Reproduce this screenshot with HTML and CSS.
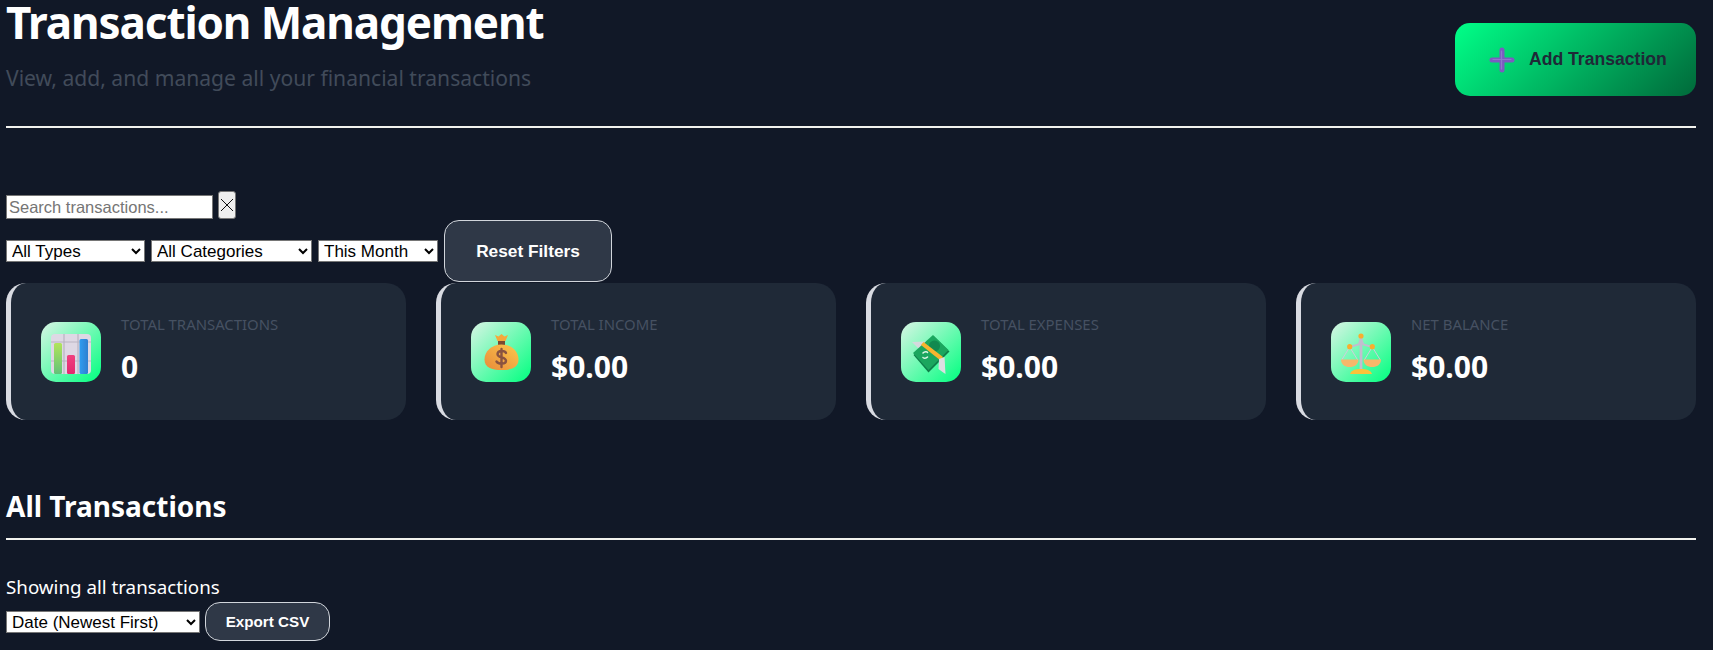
FILE: index.html
```html
<!DOCTYPE html>
<html lang="en">
<head>
    <meta charset="UTF-8">
    <meta name="viewport" content="width=device-width, initial-scale=1.0">
    <title>Transaction Management</title>
    <link rel="stylesheet" href="styles.css">
</head>
<body>
    <div class="page">
        <header class="page-header">
            <div>
                <h1>Transaction Management</h1>
                <p class="subtitle">View, add, and manage all your financial transactions</p>
            </div>
            <button class="add-btn">
                <svg class="plus" viewBox="0 0 28 28" width="28" height="28">
                    <path d="M14 4v20M4 14h20" stroke="#7a5cc0" stroke-width="5" stroke-linecap="round" fill="none"/>
                    <path d="M13.500 5v18M5 13.500h18" stroke="#8f78cc" stroke-width="1.200" stroke-linecap="round" fill="none"/>
                </svg>
                Add Transaction
            </button>
        </header>

        <div class="search-row">
            <input type="text" class="search" placeholder="Search transactions...">
            <button class="clear-btn">
                <svg viewBox="0 0 14 14" width="14" height="14">
                    <path d="M1 1l12 12M13 1l-12 12" stroke="#111" stroke-width="1" fill="none"/>
                </svg>
            </button>
        </div>
        <div class="filter-row">
            <select class="sel-type"><option>All Types</option></select>
            <select class="sel-cat"><option>All Categories</option></select>
            <select class="sel-range"><option>This Month</option></select>
            <button class="reset-btn">Reset Filters</button>
        </div>

        <section class="cards">
            <div class="card">
                <div class="card-icon">
                    <svg viewBox="0 0 60 60" width="60" height="60">
                        <defs>
                            <linearGradient id="barGreen" x1="0" y1="0" x2="0" y2="1">
                                <stop offset="0" stop-color="#b2e45a"/>
                                <stop offset="1" stop-color="#62c27a"/>
                            </linearGradient>
                            <linearGradient id="barPink" x1="0" y1="0" x2="0" y2="1">
                                <stop offset="0" stop-color="#f0417f"/>
                                <stop offset="1" stop-color="#e2286f"/>
                            </linearGradient>
                            <linearGradient id="barBlue" x1="0" y1="0" x2="1" y2="0">
                                <stop offset="0" stop-color="#2f9df0"/>
                                <stop offset="1" stop-color="#2f7fd0"/>
                            </linearGradient>
                        </defs>
                        <rect x="10" y="12" width="40" height="40" rx="4" fill="#ded8e4"/>
                        <path d="M10 20h40M10 39h40M23 12v40M37 12v40" stroke="#b9b4c2" stroke-width="1.200"/>
                        <rect x="13" y="21" width="8" height="31" rx="1.500" fill="url(#barGreen)"/>
                        <rect x="26" y="33" width="8" height="19" rx="1.500" fill="url(#barPink)"/>
                        <rect x="38.500" y="17" width="8.500" height="35" rx="1.500" fill="url(#barBlue)"/>
                    </svg>
                </div>
                <div>
                    <div class="card-label">TOTAL TRANSACTIONS</div>
                    <div class="card-value">0</div>
                </div>
            </div>
            <div class="card">
                <div class="card-icon">
                    <svg viewBox="0 0 60 60" width="60" height="60">
                        <defs>
                            <linearGradient id="bag" x1="1" y1="0" x2="0" y2="1">
                                <stop offset="0" stop-color="#fcc84c"/>
                                <stop offset="1" stop-color="#e88a3a"/>
                            </linearGradient>
                        </defs>
                        <path d="M27 18h7v6h-7z" fill="#7a4a30"/>
                        <path d="M26.500 19l-2.500-6 3.500 1.500 3-2.500 3 2.500 3.500-1.500-2.500 6z" fill="#f5a93c"/>
                        <path d="M30.500 22.500c-10 0-17 7-17 15 0 8 7 10.500 17 10.500s17-2.500 17-10.500c0-8-7-15-17-15z" fill="url(#bag)"/>
                        <path d="M35 31c-1-2.500-8-3-8.500 .8-.5 4.500 8.500 2.500 8.500 7 0 3.700-7.500 3.700-9.500 .7M30.500 27v18" stroke="#8a5340" stroke-width="2.400" fill="none" stroke-linecap="round"/>
                    </svg>
                </div>
                <div>
                    <div class="card-label">TOTAL INCOME</div>
                    <div class="card-value">$0.00</div>
                </div>
            </div>
            <div class="card">
                <div class="card-icon">
                    <svg viewBox="0 0 60 60" width="60" height="60">
                        <path d="M11 20l14-.5 3 7-10 .5z" fill="#d5d9dd"/>
                        <path d="M12.500 33l20-19 16 15.500-21 21z" fill="#0e7f4a"/>
                        <path d="M12 31l20-18 15.500 15-20 20z" fill="#1ba65e"/>
                        <circle cx="33.500" cy="24" r="5.500" fill="#12894f"/>
                        <path d="M22.500 20l19.500 15-2.500 3.500-19.500-15.500z" fill="#f8b42f"/>
                        <path d="M38 37l5.500-2 1 17-3-2-4-3z" fill="#dcdee2"/>
                        <path d="M22 31c1.500-1.500 4-1.500 4.500-.5M26.500 35c-1.500 1.500-4 1.500-4.500 .5" stroke="#dcf7e6" stroke-width="1.600" fill="none" stroke-linecap="round"/>
                    </svg>
                </div>
                <div>
                    <div class="card-label">TOTAL EXPENSES</div>
                    <div class="card-value">$0.00</div>
                </div>
            </div>
            <div class="card">
                <div class="card-icon">
                    <svg viewBox="0 0 60 60" width="60" height="60">
                        <path d="M30 14v35" stroke="#c4bcd0" stroke-width="2.800"/>
                        <path d="M18.700 25l9-2.500 2.300-5 2.300 5 9 2.500" stroke="#c4bcd0" stroke-width="2" fill="none"/>
                        <path d="M18.700 25l-8 13M18.700 25l8 13M41.300 25l-8 13M41.300 25l8 13" stroke="#d2ccdc" stroke-width="1" fill="none"/>
                        <circle cx="30" cy="14" r="2.600" fill="#f9ae2e"/>
                        <circle cx="18.700" cy="24.700" r="2.600" fill="#f9ae2e"/>
                        <circle cx="41.300" cy="24.700" r="2.600" fill="#f9ae2e"/>
                        <path d="M10 37.500h17.500c0 5-4 7.500-8.750 7.500s-8.750-2.500-8.750-7.500zM32.500 37.500h17.500c0 5-4 7.500-8.750 7.500s-8.750-2.500-8.750-7.500z" fill="#f7b76a"/>
                        <path d="M19 52c1-4 6-5 11-5s10 1 11 5z" fill="#fbc23a"/>
                    </svg>
                </div>
                <div>
                    <div class="card-label">NET BALANCE</div>
                    <div class="card-value">$0.00</div>
                </div>
            </div>
        </section>

        <h2>All Transactions</h2>
        <p class="showing">Showing all transactions</p>
        <div class="sort-row">
            <select class="sel-sort"><option>Date (Newest First)</option></select>
            <button class="export-btn">Export CSV</button>
        </div>
    </div>
</body>
</html>
```

FILE: styles.css
```css
html, body {
  margin: 0;
  height: 650px;
  overflow: hidden;
}

body {
  background-color: #111827;
  color: white;
  font-family: "Noto Sans", "Open Sans", sans-serif;
}

.page {
  padding: 0 17px 0 6px;
}

.page-header {
  display: flex;
  justify-content: space-between;
  align-items: flex-start;
  height: 126px;
  border-bottom: 2px solid #f2f2ee;
  margin-bottom: 63px;
}

h1 {
  margin: 0;
  font-size: 44px;
  line-height: 44px;
  font-weight: 700;
  letter-spacing: -1.1px;
}

.subtitle {
  margin: 20px 0 0;
  font-size: 21.100px;
  line-height: 28px;
  color: #414b5a;
}

button, input, select {
  font-family: "Liberation Sans", Arial, sans-serif;
}

.add-btn {
  display: flex;
  align-items: center;
  gap: 13px;
  width: 241px;
  height: 73px;
  margin-top: 23px;
  padding: 0 0 0 33px;
  border: none;
  border-radius: 15px;
  background: linear-gradient(135deg, #00ff88, #00693a);
  color: #1f2937;
  font-size: 17.600px;
  font-weight: 700;
}

.search-row {
  display: flex;
  align-items: flex-end;
  gap: 5px;
}

.search {
  width: 207px;
  height: 24px;
  padding: 1px 2px;
  box-sizing: border-box;
  font-size: 16.500px;
  border: 1px solid #767676;
}

.clear-btn {
  display: flex;
  align-items: center;
  justify-content: center;
  width: 18px;
  height: 28px;
  padding: 0;
  background-color: #efefef;
  border: 1px solid #767676;
  border-radius: 3px;
}

.filter-row {
  display: flex;
  align-items: center;
  gap: 6px;
  margin-top: 1px;
}

select {
  font-size: 17px;
  height: 22px;
  padding-left: 1px;
  background-color: white;
  color: black;
  border: 1px solid #767676;
  border-radius: 0;
}

.sel-type { width: 139px; }
.sel-cat { width: 161px; }
.sel-range { width: 120px; }
.sel-sort { width: 194px; }

.reset-btn, .export-btn {
  background-color: #2f3847;
  color: white;
  border: 1px solid #d1d5db;
  font-weight: 700;
}

.reset-btn {
  width: 168px;
  height: 62px;
  border-radius: 15px;
  font-size: 17.300px;
}

.cards {
  display: grid;
  grid-template-columns: repeat(4, 1fr);
  gap: 30px;
  margin-top: 1px;
}

.card {
  display: flex;
  align-items: center;
  gap: 20px;
  height: 137px;
  padding-left: 30px;
  box-sizing: border-box;
  background-color: #1f2937;
  border-left: 5px solid #d9dbe2;
  border-radius: 20px;
}

.card-icon {
  flex: none;
  width: 60px;
  height: 60px;
  border-radius: 15px;
  overflow: hidden;
  background: linear-gradient(135deg, #d9f5e5, #00ff7f);
}

.card-icon svg {
  display: block;
}

.card-label {
  font-size: 14.900px;
  line-height: 20px;
  color: #465162;
  margin-top: -4px;
}

.card-value {
  font-size: 30px;
  line-height: 39px;
  font-weight: 700;
  margin-top: 13px;
}

h2 {
  margin: 66px 0 0;
  height: 52px;
  font-size: 28px;
  line-height: 40px;
  font-weight: 700;
  border-bottom: 2px solid #f2f2ee;
}

.showing {
  margin: 35px 0 0;
  font-size: 18.750px;
  line-height: 24px;
}

.sort-row {
  display: flex;
  align-items: center;
  gap: 5px;
  margin-top: 3px;
}

.export-btn {
  width: 125px;
  height: 39px;
  border-radius: 15px;
  font-size: 15.200px;
}
```
